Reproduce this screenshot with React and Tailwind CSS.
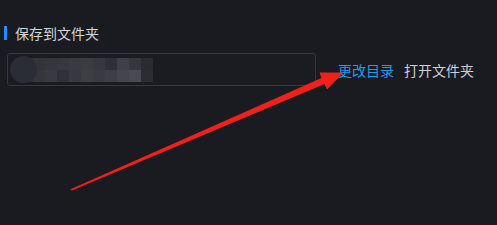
import React from "react";

const blocks = [
  ["#2f3036", "#33343a", "#35363b", "#37383d", "#3a3b40", "#3b3c41", "#37383d", "#2e3038", "#3f4045", "#36373c", "#2a2b30"],
  ["#2c2f36", "#35363b", "#393a3f", "#2f3138", "#38393e", "#3d3e43", "#3a3b40", "#3e3f44", "#45464b", "#4a4b50", "#2c2d31"],
];

function Arrow() {
  // tail (71,190) -> tip (343,72)
  return (
    <svg className="absolute left-0 top-0 pointer-events-none" width="497" height="225" viewBox="0 0 497 225">
      <polygon
        points="70,189.5 72,190.5 324.5,84 327,89.5 343.5,72.5 319.5,72.5 321.5,78"
        fill="#f0201c"
      />
    </svg>
  );
}

export default function App() {
  return (
    <div
      className="relative w-[497px] h-[225px] bg-[#1a1b20] overflow-hidden"
      style={{ fontFamily: '"Noto Sans CJK SC", "Noto Sans", sans-serif' }}
    >
      <div className="pl-[4px] pt-[25px]">
        <div className="flex items-center h-[15px]">
          <div className="w-[3px] h-[14px] bg-[#1e90ff]" />
          <span className="ml-[8px] text-[14px] leading-none text-[#d4d6da]">保存到文件夹</span>
        </div>
      </div>
      <div className="flex items-center pl-[7px] mt-[13px]">
        <div className="w-[309px] h-[33px] border border-[#36373c] rounded-[3px] bg-[#1b1c21] flex items-center pl-[2px]">
          <div className="relative flex items-center">
            <div className="w-[27px] h-[27px] rounded-full bg-[#2a2d35] z-10" />
            <div className="-ml-[16px] flex flex-col">
              {blocks.map((row, i) => (
                <div key={i} className="flex">
                  {row.map((c, j) => (
                    <div key={j} className="w-[12px] h-[12px]" style={{ background: c }} />
                  ))}
                </div>
              ))}
            </div>
          </div>
        </div>
        <span className="ml-[22px] text-[14px] leading-none text-[#1f9bf0]">更改目录</span>
        <span className="ml-[10px] text-[14px] leading-none text-[#cfd1d5]">打开文件夹</span>
      </div>
      <Arrow />
    </div>
  );
}
